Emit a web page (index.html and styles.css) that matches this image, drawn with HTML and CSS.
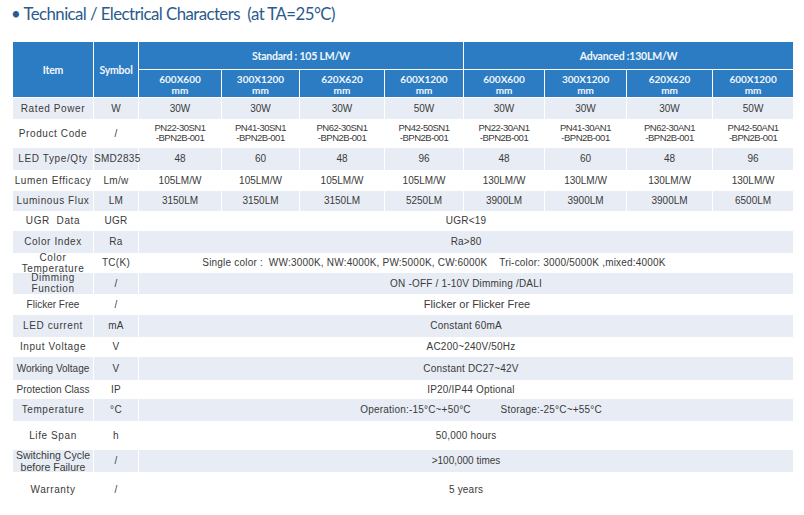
FILE: index.html
```html
<!DOCTYPE html>
<html>
<head>
<meta charset="utf-8">
<link rel="stylesheet" href="styles.css">
</head>
<body>
<h1 class="title">• Technical / Electrical Characters&nbsp; (at TA=25°C)</h1>
<table class="spec">
  <colgroup>
    <col class="c81"><col class="c45">
    <col class="c83"><col class="c78"><col class="c85"><col class="c79">
    <col class="c81"><col class="c82"><col class="c86"><col class="c81">
  </colgroup>
  <thead>
    <tr class="r28">
      <th rowspan="2">Item</th>
      <th rowspan="2">Symbol</th>
      <th colspan="4">Standard : 105 LM/W</th>
      <th colspan="4">Advanced :130LM/W</th>
    </tr>
    <tr class="r28 sub">
      <th>600X600<br>mm</th><th>300X1200<br>mm</th><th>620X620<br>mm</th><th>600X1200<br>mm</th>
      <th>600X600<br>mm</th><th>300X1200<br>mm</th><th>620X620<br>mm</th><th>600X1200<br>mm</th>
    </tr>
  </thead>
  <tbody>
    <tr class="alt r21">
      <td class="item">Rated Power</td><td class="sym">W</td>
      <td>30W</td><td>30W</td><td>30W</td><td>50W</td><td>30W</td><td>30W</td><td>30W</td><td>50W</td>
    </tr>
    <tr class="r29">
      <td class="item">Product Code</td><td class="sym">/</td>
      <td class="code">PN22-30SN1<br>-BPN2B-001</td><td class="code">PN41-30SN1<br>-BPN2B-001</td><td class="code">PN62-30SN1<br>-BPN2B-001</td><td class="code">PN42-50SN1<br>-BPN2B-001</td>
      <td class="code">PN22-30AN1<br>-BPN2B-001</td><td class="code">PN41-30AN1<br>-BPN2B-001</td><td class="code">PN62-30AN1<br>-BPN2B-001</td><td class="code">PN42-50AN1<br>-BPN2B-001</td>
    </tr>
    <tr class="alt r22">
      <td class="item">LED Type/Qty</td><td class="sym">SMD2835</td>
      <td>48</td><td>60</td><td>48</td><td>96</td><td>48</td><td>60</td><td>48</td><td>96</td>
    </tr>
    <tr class="r21">
      <td class="item">Lumen Efficacy</td><td class="sym">Lm/w</td>
      <td>105LM/W</td><td>105LM/W</td><td>105LM/W</td><td>105LM/W</td><td>130LM/W</td><td>130LM/W</td><td>130LM/W</td><td>130LM/W</td>
    </tr>
    <tr class="alt r20">
      <td class="item">Luminous Flux</td><td class="sym">LM</td>
      <td>3150LM</td><td>3150LM</td><td>3150LM</td><td>5250LM</td><td>3900LM</td><td>3900LM</td><td>3900LM</td><td>6500LM</td>
    </tr>
    <tr class="r20">
      <td class="item">UGR&nbsp; Data</td><td class="sym">UGR</td>
      <td colspan="8" class="wide">UGR&lt;19</td>
    </tr>
    <tr class="alt r22">
      <td class="item">Color Index</td><td class="sym">Ra</td>
      <td colspan="8" class="wide">Ra&gt;80</td>
    </tr>
    <tr class="r20">
      <td class="item"><div class="two">Color<br>Temperature</div></td><td class="sym">TC(K)</td>
      <td colspan="8" class="wide shiftl">Single color :&nbsp; WW:3000K, NW:4000K, PW:5000K, CW:6000K&nbsp;&nbsp;&nbsp; Tri-color: 3000/5000K ,mixed:4000K</td>
    </tr>
    <tr class="alt r21">
      <td class="item"><div class="two">Dimming<br>Function</div></td><td class="sym">/</td>
      <td colspan="8" class="wide">ON -OFF / 1-10V Dimming /DALI</td>
    </tr>
    <tr class="r21">
      <td class="item plain">Flicker Free</td><td class="sym">/</td>
      <td colspan="8" class="wide big shiftr">Flicker or Flicker Free</td>
    </tr>
    <tr class="alt r22">
      <td class="item">LED current</td><td class="sym">mA</td>
      <td colspan="8" class="wide">Constant 60mA</td>
    </tr>
    <tr class="r20">
      <td class="item">Input Voltage</td><td class="sym">V</td>
      <td colspan="8" class="wide shiftr3">AC200~240V/50Hz</td>
    </tr>
    <tr class="alt r23">
      <td class="item plain">Working Voltage</td><td class="sym">V</td>
      <td colspan="8" class="wide shiftr3">Constant DC27~42V</td>
    </tr>
    <tr class="r19">
      <td class="item plain">Protection Class</td><td class="sym">IP</td>
      <td colspan="8" class="wide shiftr3">IP20/IP44 Optional</td>
    </tr>
    <tr class="alt r22">
      <td class="item">Temperature</td><td class="sym">°C</td>
      <td colspan="8" class="wide shiftr2">Operation:-15°C~+50°C&nbsp;&nbsp;&nbsp;&nbsp;&nbsp;&nbsp;&nbsp;&nbsp;&nbsp; Storage:-25°C~+55°C</td>
    </tr>
    <tr class="r29">
      <td class="item">Life Span</td><td class="sym">h</td>
      <td colspan="8" class="wide">50,000 hours</td>
    </tr>
    <tr class="alt r22">
      <td class="item plain"><div class="two big2">Switching Cycle<br>before Failure</div></td><td class="sym">/</td>
      <td colspan="8" class="wide plainw">&gt;100,000 times</td>
    </tr>
    <tr class="r35">
      <td class="item">Warranty</td><td class="sym">/</td>
      <td colspan="8" class="wide">5 years</td>
    </tr>
  </tbody>
</table>
</body>
</html>
```

FILE: styles.css
```css
html, body {
  margin: 0;
  padding: 0;
  background: #ffffff;
}
body {
  padding: 0 0 0 12px;
}
.title {
  margin: 0 0 0 -1px;
  height: 41px;
  padding-top: 1px;
  box-sizing: border-box;
  font-family: "Lato", "Open Sans", sans-serif;
  font-weight: 400;
  font-size: 16.8px;
  letter-spacing: -0.55px;
  line-height: 26px;
  color: #2b5a8d;
  white-space: nowrap;
}
.spec {
  width: 781px;
  table-layout: fixed;
  border-collapse: collapse;
  font-family: "Liberation Sans", Arial, sans-serif;
  font-size: 10px;
  color: #3a3a3a;
}
.c81 { width: 81px; }
.c45 { width: 45px; }
.c83 { width: 83px; }
.c78 { width: 78px; }
.c85 { width: 85px; }
.c79 { width: 79px; }
.c82 { width: 82px; }
.c86 { width: 86px; }

.spec th, .spec td {
  border: 1px solid #ffffff;
  padding: 0;
  text-align: center;
  vertical-align: middle;
  line-height: 11px;
  overflow: visible;
  white-space: nowrap;
}
.spec th {
  background: #2c7cc4;
  color: #f2f6fa;
  font-family: "Lato", "Open Sans", sans-serif;
  font-weight: 700;
  font-size: 10.5px;
  letter-spacing: -0.2px;
  line-height: 12px;
}
.spec .sub th {
  font-size: 10px;
  letter-spacing: 0;
  line-height: 11px;
  padding-top: 2px;
}
.spec tbody tr.alt td { background: #e8edf5; }
.spec tbody td { border-top: 0; border-bottom: 0; }

.r19 { height: 19px; }
.r20 { height: 20px; }
.r21 { height: 21px; }
.r22 { height: 22px; }
.r23 { height: 23px; }
.r28 { height: 28px; }
.r29 { height: 29px; }
.r30 { height: 30px; }
.r35 { height: 35px; }

.item {
  letter-spacing: 0.6px;
  font-size: 10px;
}
.item.plain { letter-spacing: 0; }
.two {
  line-height: 11px;
  margin: -2px 0;
}
.big2 {
  font-size: 10.5px;
  line-height: 12px;
  margin: -3px 0;
}
.sym { letter-spacing: 0.3px; }
.spec td.code {
  font-size: 9.5px;
  line-height: 10px;
  letter-spacing: -0.5px;
}
.wide { letter-spacing: 0.2px; }
.big { font-size: 11px; letter-spacing: 0; }
.plainw { letter-spacing: 0; }
.spec td.shiftl { padding-right: 64px; }
.spec td.shiftr { padding-left: 22px; }
.spec td.shiftr2 { padding-left: 30px; }
.spec td.shiftr3 { padding-left: 10px; }
```
